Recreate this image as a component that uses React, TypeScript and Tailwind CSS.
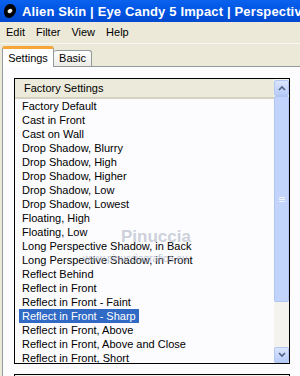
import React from "react";

const PRESETS = [
  "Factory Default",
  "Cast in Front",
  "Cast on Wall",
  "Drop Shadow, Blurry",
  "Drop Shadow, High",
  "Drop Shadow, Higher",
  "Drop Shadow, Low",
  "Drop Shadow, Lowest",
  "Floating, High",
  "Floating, Low",
  "Long Perspective Shadow, in Back",
  "Long Perspective Shadow, in Front",
  "Reflect Behind",
  "Reflect in Front",
  "Reflect in Front - Faint",
  "Reflect in Front - Sharp",
  "Reflect in Front, Above",
  "Reflect in Front, Above and Close",
  "Reflect in Front, Short",
];

const SELECTED = 15;

function AlienIcon() {
  return (
    <svg width="14" height="16" viewBox="0 0 14 16" className="shrink-0">
      <path d="M7 1 C11 1 13 4 13 7 C13 11 9 15 6 15 C3 15 1 12 1 9 C1 5 3 1 7 1 Z" fill="#000" />
      <ellipse cx="7" cy="8" rx="2.6" ry="2" fill="#e8e8e8" transform="rotate(-30 7 8)" />
      <ellipse cx="6.4" cy="7.6" rx="1.2" ry="0.9" fill="#fff" />
    </svg>
  );
}

function ScrollButton({ up }: { up: boolean }) {
  return (
    <div className="h-[16px] shrink-0 rounded-[2px] border border-[#b4c6f2] bg-gradient-to-b from-[#dbe5fd] to-[#b7cbf8] flex items-center justify-center">
      <svg width="8" height="6" viewBox="0 0 8 6">
        <path d={up ? "M1 5 L4 2 L7 5" : "M1 1 L4 4 L7 1"} stroke="#4d6185" strokeWidth="1.6" fill="none" />
      </svg>
    </div>
  );
}

export default function App() {
  return (
    <div className="w-[300px] h-[376px] overflow-hidden flex flex-col bg-[#ece9d8] font-['Liberation_Sans',Arial,sans-serif] text-[11px] text-black">
      {/* Title bar */}
      <div className="h-[22px] shrink-0 flex items-center gap-[5px] pl-[3px] bg-gradient-to-b from-[#0b62ee] via-[#0054e3] to-[#0049cf]">
        <AlienIcon />
        <span className="text-white font-bold text-[13px] tracking-[0.15px] whitespace-nowrap leading-none">
          Alien Skin | Eye Candy 5 Impact | Perspective
        </span>
      </div>

      {/* Menu bar */}
      <div className="h-[22px] shrink-0 flex items-center pl-[1px] border-b border-[#f7f6f0]">
        {["Edit", "Filter", "View", "Help"].map((m) => (
          <span key={m} className="px-[5px] mr-[1px]">{m}</span>
        ))}
      </div>

      {/* Tabs */}
      <div className="h-[22px] shrink-0 flex items-end pl-[2px]">
        <div className="relative z-10 -mb-px h-[21px] w-[52px] rounded-t-[3px] border-x border-[#919b9c] bg-white border-t-[3px] border-t-[#f5a53a] flex items-center justify-center">
          Settings
        </div>
        <div className="h-[16px] w-[38px] rounded-t-[3px] border-t border-r border-[#919b9c] bg-gradient-to-b from-white to-[#ecebe6] flex items-center justify-center">
          Basic
        </div>
      </div>

      {/* Tab panel */}
      <div className="relative flex-1 ml-[2px] border-l border-t border-[#919b9c] bg-[#fcfcfe] pt-[11px] pl-[11px]">
        <div className="w-[276px] h-[286px] border border-black flex overflow-hidden">
          <div className="flex-1 flex flex-col overflow-hidden">
            <div className="h-[20px] shrink-0 bg-[#ebeadb] border-b-2 border-[#d6d2c2] flex items-center pl-[9px]">
              Factory Settings
            </div>
            {PRESETS.map((p, i) => (
              <div key={p} className="h-[14px] shrink-0 pl-[4px] leading-[14px] whitespace-nowrap">
                <span className={i === SELECTED ? "inline-block px-[3px] bg-[#316ac5] text-white" : "inline-block px-[3px]"}>
                  {p}
                </span>
              </div>
            ))}
          </div>

          {/* Scrollbar */}
          <div className="w-[15px] shrink-0 flex flex-col pt-px bg-[#f4f3ee]">
            <ScrollButton up />
            <div className="h-[206px] shrink-0 rounded-[2px] border border-[#b1c5f3] bg-[#c3d4fc] flex items-center justify-center">
              <div className="flex flex-col gap-px">
                <div className="w-[6px] h-px bg-[#eef3ff]" />
                <div className="w-[6px] h-px bg-[#eef3ff]" />
                <div className="w-[6px] h-px bg-[#eef3ff]" />
              </div>
            </div>
            <div className="flex-1" />
            <ScrollButton up={false} />
          </div>
        </div>

        <div className="mt-[10px] w-[276px] h-[20px] border border-black bg-[#f4f3ee]" />

        {/* Watermark */}
        <div className="absolute left-[118px] top-[161px] text-[17px] font-bold text-[#b9bfcd] opacity-70 leading-none pointer-events-none">
          Pinuccia
        </div>
        <div className="absolute left-[80px] top-[187px] text-[10px] text-[#a7afc2] opacity-70 leading-none pointer-events-none">
          www.pinucciagrafica.eu
        </div>
      </div>
    </div>
  );
}
